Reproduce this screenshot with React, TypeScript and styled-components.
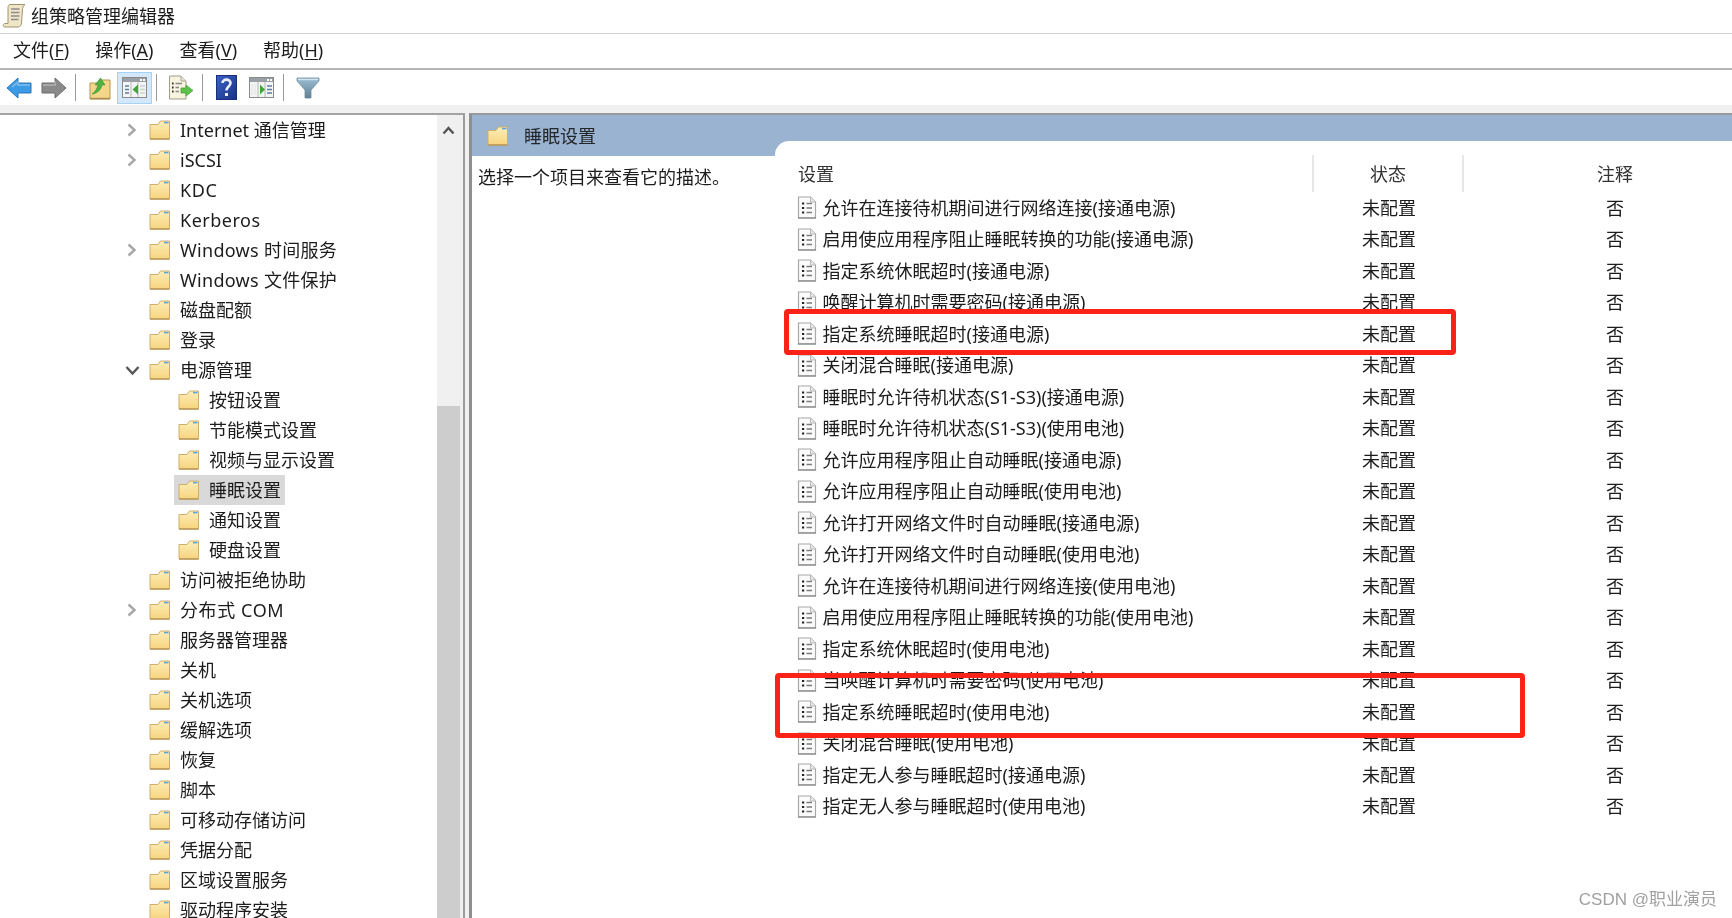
import React from "react";
import styled, { createGlobalStyle } from "styled-components";

const GlobalStyle = createGlobalStyle`
  html, body {
    margin: 0;
    padding: 0;
    height: 100%;
    overflow: hidden;
    background: #fff;
  }
  body {
    font-family: "Noto Sans", "Noto Sans CJK SC", sans-serif;
    font-size: 18px;
    color: #1c1c1c;
  }
`;

const Page = styled.div`
  position: relative;
  display: flex;
  flex-direction: column;
  width: 1732px;
  height: 918px;
  overflow: hidden;
  filter: blur(0.35px);
`;

const TitleBar = styled.div`
  display: flex;
  align-items: center;
  gap: 5px;
  height: 34px;
  padding: 0 0 3px 2px;
  box-sizing: border-box;
  border-bottom: 1px solid #cfcfcf;
  flex: none;
`;

const MenuBar = styled.div`
  display: flex;
  align-items: center;
  gap: 26px;
  height: 32px;
  padding: 0 0 2px 13px;
  border-bottom: 2px solid #b4b4b4;
  flex: none;
`;

const MenuItem = styled.span`
  line-height: 24px;
  u {
    text-underline-offset: 2px;
  }
`;

const Toolbar = styled.div`
  display: flex;
  align-items: center;
  height: 35px;
  padding-left: 1px;
  flex: none;
`;

const ToolButton = styled.div<{ $active?: boolean }>`
  display: flex;
  align-items: center;
  justify-content: center;
  width: 35px;
  height: 32px;
  box-sizing: border-box;
  background: ${(p) => (p.$active ? "#d3e9fb" : "transparent")};
  border: 1px solid ${(p) => (p.$active ? "#a5d3f7" : "transparent")};
`;

const ToolSep = styled.div`
  width: 1px;
  height: 27px;
  margin: 0 6px 0 4px;
  background: #9a9a9a;
`;

const Main = styled.div`
  display: flex;
  flex: 1;
  min-height: 0;
  padding-top: 8px;
  background: #f0f0f0;
`;

const TreePane = styled.div`
  display: flex;
  width: 463px;
  border-top: 2px solid #a3a3a3;
  border-right: 2px solid #9c9c9c;
  background: #fff;
  flex: none;
`;

const TreeList = styled.div`
  width: 437px;
  flex: none;
  overflow: hidden;
`;

const TreeRow = styled.div<{ $nested: boolean }>`
  display: flex;
  align-items: center;
  height: 30px;
  padding-left: ${(p) => (p.$nested ? 178 : 124)}px;
`;

const Caret = styled.span`
  display: flex;
  align-items: center;
  justify-content: center;
  width: 16px;
  margin-right: 9px;
  flex: none;
`;

const TreeLabel = styled.span<{ $track?: number }>`
  display: flex;
  align-items: center;
  gap: 9px;
  height: 30px;
  line-height: 30px;
  white-space: nowrap;
  padding-right: 4px;
  letter-spacing: ${(p) => p.$track ?? 0}px;
`;

const SelectedLabel = styled(TreeLabel)`
  background: #d9d9d9;
  margin-left: -4px;
  padding-left: 4px;
`;

const ScrollTrack = styled.div`
  display: flex;
  flex-direction: column;
  width: 26px;
  padding-right: 3px;
  box-sizing: border-box;
  background: #f0f0f0;
  flex: none;
`;

const ScrollArrow = styled.div`
  display: flex;
  justify-content: center;
  align-items: center;
  height: 30px;
  margin-bottom: 261px;
`;

const ScrollThumb = styled.div`
  flex: 1;
  background: #cdcdcd;
`;

const RightPane = styled.div`
  display: flex;
  flex: 1;
  min-width: 0;
  margin-left: 4px;
  border-top: 2px solid #9a9a9a;
  border-left: 3px solid #8f8f8f;
  background: #fff;
`;

const DescColumn = styled.div`
  width: 303px;
  flex: none;
`;

const DescHeader = styled.div`
  display: flex;
  align-items: center;
  gap: 15px;
  height: 41px;
  padding-left: 15px;
  box-sizing: border-box;
  background: #9ab3d1;
`;

const DescHeaderTitle = styled.span`
  color: #23262b;
  line-height: 24px;
`;

const DescText = styled.div`
  padding: 9px 0 0 6px;
  line-height: 24px;
  white-space: nowrap;
`;

const ListColumn = styled.div`
  flex: 1;
  min-width: 0;
  padding-top: 26px;
  background: linear-gradient(#9ab3d1 41px, #fff 41px);
`;

const ListPanel = styled.div`
  height: 100%;
  padding-top: 14px;
  box-sizing: border-box;
  background: #fff;
  border-top-left-radius: 14px;
`;

const ListHeader = styled.div`
  display: grid;
  grid-template-columns: 539px 150px 1fr;
  height: 37px;
`;

const HeaderCell = styled.div<{ $center?: boolean }>`
  display: flex;
  align-items: center;
  justify-content: ${(p) => (p.$center ? "center" : "flex-start")};
  padding: 0 0 2px ${(p) => (p.$center ? 0 : 23)}px;
  border-right: 2px solid #e6e6e6;
  color: #333;
`;

const NoteHeader = styled(HeaderCell)`
  padding-left: 34px;
  border-right: 0;
`;

const ListRow = styled.div`
  display: grid;
  grid-template-columns: 539px 150px 1fr;
  height: 31.5px;
  align-items: center;
`;

const NameCell = styled.div`
  display: flex;
  align-items: center;
  gap: 5.5px;
  padding-left: 22px;
  line-height: 24px;
  white-space: nowrap;
`;

const StatusCell = styled.div`
  text-align: center;
  line-height: 24px;
`;

const NoteCell = styled.div`
  padding-left: 34px;
  text-align: center;
  line-height: 24px;
`;

const Highlight = styled.div<{ $l: number; $t: number; $w: number; $h: number }>`
  position: absolute;
  left: ${(p) => p.$l}px;
  top: ${(p) => p.$t}px;
  width: ${(p) => p.$w}px;
  height: ${(p) => p.$h}px;
  box-sizing: border-box;
  border: 5px solid #fb2317;
  border-radius: 4px;
`;

const Watermark = styled.div`
  position: absolute;
  right: 15px;
  top: 889px;
  font-family: "Liberation Sans", "Noto Sans CJK SC", sans-serif;
  font-size: 17px;
  line-height: 22px;
  color: #a0a0a0;
  white-space: nowrap;
`;

const FolderIcon = () => (
  <svg width="22" height="20" viewBox="0 0 22 20" style={{ flex: "none" }}>
    <defs>
      <linearGradient id="folderFill" x1="0" y1="0" x2="0" y2="1">
        <stop offset="0" stopColor="#fdeeb8" />
        <stop offset="1" stopColor="#f6d47e" />
      </linearGradient>
    </defs>
    <path d="M1 4.5 H9 L11.5 1 H20.5 V19 H1 Z" fill="url(#folderFill)" stroke="#cfae6b" strokeWidth="1" />
    <path d="M1 19 H20.5" stroke="#b8955a" strokeWidth="1.4" />
    <path d="M15 2.6 H19.5" stroke="#5aa8e0" strokeWidth="1.6" />
  </svg>
);

const PolicyIcon = () => (
  <svg width="20" height="23" viewBox="0 0 20 23" style={{ flex: "none" }}>
    <path d="M1.5 1 H13.5 L18.5 6 V21.8 H1.5 Z" fill="#fbfbfb" stroke="#a8a8a8" strokeWidth="1.2" />
    <path d="M13.5 1 V6 H18.5" fill="#e8e8e8" stroke="#b8b8b8" strokeWidth="1" />
    <path d="M1 22 H19" stroke="#8c8c8c" strokeWidth="1.2" />
    <path d="M5 7.5 H7.2 M5 12 H7.2 M5 16.5 H7.2" stroke="#222" strokeWidth="2.2" />
    <path d="M9.5 7.5 H15 M9.5 12 H15 M9.5 16.5 H15" stroke="#7b7b7b" strokeWidth="1.4" />
  </svg>
);

const ChevronRight = () => (
  <svg width="12" height="14" viewBox="0 0 12 14">
    <path d="M2.5 1.5 L8.5 7 L2.5 12.5" fill="none" stroke="#a8a8a8" strokeWidth="2.4" />
  </svg>
);

const ChevronDown = () => (
  <svg width="15" height="11" viewBox="0 0 15 11">
    <path d="M1.5 2 L7.5 8.5 L13.5 2" fill="none" stroke="#555" strokeWidth="2.4" />
  </svg>
);

const ChevronUp = () => (
  <svg width="13" height="9" viewBox="0 0 13 9">
    <path d="M1.5 7.5 L6.5 2 L11.5 7.5" fill="none" stroke="#555" strokeWidth="2.4" />
  </svg>
);

const ScrollIcon = () => (
  <svg width="24" height="25" viewBox="0 0 24 25" style={{ flex: "none" }}>
    <path d="M8 1.5 H23 C21 3 20.5 5 20.5 7 L19.5 20 C19.3 22.5 18 24 16 24 H3 C0.5 24 0.5 21 3 20.5 H6 L6 5 C6 3 6.5 1.5 8 1.5 Z" fill="#efe6c8" stroke="#a0946f" strokeWidth="1" />
    <path d="M9 6 H17.5 M9 9.5 H17.5 M9 13 H17.5 M9 16.5 H16.5" stroke="#8d8d8d" strokeWidth="1.3" />
  </svg>
);

const ArrowIcon = ({ dir, fill, edge }: { dir: "l" | "r"; fill: string; edge: string }) => (
  <svg width="26" height="24" viewBox="0 0 26 24">
    <path
      d={dir === "l" ? "M1 12 L12 2 V7 H25 V17 H12 V22 Z" : "M25 12 L14 2 V7 H1 V17 H14 V22 Z"}
      fill={fill}
      stroke={edge}
      strokeWidth="1"
    />
    <path d={dir === "l" ? "M6 11 L12 6 V9 H24" : "M2 9 H14 V5"} fill="none" stroke="#ffffff" strokeOpacity="0.35" strokeWidth="1.5" />
  </svg>
);

const UpFolderIcon = () => (
  <svg width="24" height="24" viewBox="0 0 24 24">
    <path d="M2 7 H10 L12 4 H22 V23 H2 Z" fill="#f3d68a" stroke="#b8964f" strokeWidth="1" />
    <path d="M2 22.5 H22" stroke="#a98a4d" strokeWidth="1.4" />
    <path d="M4 18 C7 16 9 13 10 9 H7 L12.5 2 L17 9 H14 C13 14 9 17.5 4 18 Z" fill="#4fb13f" stroke="#3c8f30" strokeWidth="0.6" />
  </svg>
);

const PanelIcon = ({ side }: { side: "l" | "r" }) => (
  <svg width="25" height="21" viewBox="0 0 25 21">
    <rect x="0.5" y="0.5" width="24" height="20" fill="#f4f4f4" stroke="#8a8a8a" />
    <rect x="1" y="1" width="23" height="4" fill="#9a9fa6" />
    <rect x="18" y="2" width="2" height="2" fill="#fff" />
    <rect x="21" y="2" width="2" height="2" fill="#fff" />
    <path d="M9 5 V20 M16 5 V20" stroke="#b5b5b5" strokeWidth="1" />
    {side === "l" ? (
      <>
        <path d="M3 9 H7 M3 12.5 H7 M3 16 H7" stroke="#5d7f9e" strokeWidth="1.6" />
        <path d="M16 7.5 V17.5 L10.5 12.5 Z" fill="#3fa63a" />
        <path d="M18 9 H23 M18 12.5 H23 M18 16 H23" stroke="#d0d0d0" strokeWidth="1.6" />
      </>
    ) : (
      <>
        <path d="M3 7 V18 M6 7 V18" stroke="#e2e2e2" strokeWidth="1" />
        <path d="M11 7.5 V17.5 L16 12.5 Z" fill="#3fa63a" />
        <path d="M18 9 H23 M18 12.5 H23 M18 16 H23" stroke="#5d7f9e" strokeWidth="1.6" />
      </>
    )}
  </svg>
);

const ExportIcon = () => (
  <svg width="26" height="25" viewBox="0 0 26 25">
    <path d="M1.5 1 H13 L18 6 V24 H1.5 Z" fill="#f8f3df" stroke="#9e9e8c" strokeWidth="1" />
    <path d="M13 1 V6 H18" fill="#e7e3d0" stroke="#a8a898" strokeWidth="1" />
    <path d="M4 8.5 H5.6 M4 12.5 H5.6 M4 16.5 H5.6" stroke="#333" strokeWidth="1.8" />
    <path d="M7.5 8.5 H14 M7.5 12.5 H11 M7.5 16.5 H11" stroke="#888" strokeWidth="1.3" />
    <path d="M13 13 H18 V10 L25 15.5 L18 21 V18 H13 Z" fill="#5cc24b" stroke="#3f9c35" strokeWidth="0.7" />
  </svg>
);

const HelpIcon = () => (
  <svg width="21" height="25" viewBox="0 0 21 25">
    <defs>
      <linearGradient id="helpFill" x1="0" y1="0" x2="1" y2="1">
        <stop offset="0" stopColor="#3b62c6" />
        <stop offset="1" stopColor="#1a3184" />
      </linearGradient>
    </defs>
    <rect x="0.5" y="0.5" width="20" height="24" fill="url(#helpFill)" stroke="#1a2f78" />
    <path d="M6.5 8 C6.5 3.5 14.5 3.5 14.5 8 C14.5 11.5 10.5 11.5 10.5 15.5" fill="none" stroke="#e9edf8" strokeWidth="2.6" />
    <rect x="9" y="18" width="3" height="3" fill="#e9edf8" />
  </svg>
);

const FilterIcon = () => (
  <svg width="24" height="22" viewBox="0 0 24 22">
    <defs>
      <linearGradient id="filterFill" x1="0" y1="0" x2="0" y2="1">
        <stop offset="0" stopColor="#9cc0d4" />
        <stop offset="1" stopColor="#5f7f92" />
      </linearGradient>
    </defs>
    <path d="M1 1 H23 V4 L15 13 V21 H9 V13 L1 4 Z" fill="url(#filterFill)" stroke="#6d8c9e" strokeWidth="0.8" />
    <path d="M2 2.5 H22" stroke="#d5e4ec" strokeWidth="1.4" />
  </svg>
);

type TreeItem = {
  label: string;
  nested?: boolean;
  caret?: "right" | "down";
  selected?: boolean;
  track?: number;
};

const treeItems: TreeItem[] = [
  { label: "Internet 通信管理", caret: "right" },
  { label: "iSCSI", caret: "right" },
  { label: "KDC", track: 0.6 },
  { label: "Kerberos", track: 0.5 },
  { label: "Windows 时间服务", caret: "right", track: 0.3 },
  { label: "Windows 文件保护", track: 0.3 },
  { label: "磁盘配额" },
  { label: "登录" },
  { label: "电源管理", caret: "down" },
  { label: "按钮设置", nested: true },
  { label: "节能模式设置", nested: true },
  { label: "视频与显示设置", nested: true },
  { label: "睡眠设置", nested: true, selected: true },
  { label: "通知设置", nested: true },
  { label: "硬盘设置", nested: true },
  { label: "访问被拒绝协助" },
  { label: "分布式 COM", caret: "right", track: 0.6 },
  { label: "服务器管理器" },
  { label: "关机" },
  { label: "关机选项" },
  { label: "缓解选项" },
  { label: "恢复" },
  { label: "脚本" },
  { label: "可移动存储访问" },
  { label: "凭据分配" },
  { label: "区域设置服务" },
  { label: "驱动程序安装" },
];

const settings = [
  "允许在连接待机期间进行网络连接(接通电源)",
  "启用使应用程序阻止睡眠转换的功能(接通电源)",
  "指定系统休眠超时(接通电源)",
  "唤醒计算机时需要密码(接通电源)",
  "指定系统睡眠超时(接通电源)",
  "关闭混合睡眠(接通电源)",
  "睡眠时允许待机状态(S1-S3)(接通电源)",
  "睡眠时允许待机状态(S1-S3)(使用电池)",
  "允许应用程序阻止自动睡眠(接通电源)",
  "允许应用程序阻止自动睡眠(使用电池)",
  "允许打开网络文件时自动睡眠(接通电源)",
  "允许打开网络文件时自动睡眠(使用电池)",
  "允许在连接待机期间进行网络连接(使用电池)",
  "启用使应用程序阻止睡眠转换的功能(使用电池)",
  "指定系统休眠超时(使用电池)",
  "当唤醒计算机时需要密码(使用电池)",
  "指定系统睡眠超时(使用电池)",
  "关闭混合睡眠(使用电池)",
  "指定无人参与睡眠超时(接通电源)",
  "指定无人参与睡眠超时(使用电池)",
];

const menus = [
  { name: "文件", key: "F" },
  { name: "操作", key: "A" },
  { name: "查看", key: "V" },
  { name: "帮助", key: "H" },
];

const App: React.FC = () => {
  return (
    <>
      <GlobalStyle />
      <Page>
        <TitleBar>
          <ScrollIcon />
          <span>组策略管理编辑器</span>
        </TitleBar>
        <MenuBar>
          {menus.map((m) => (
            <MenuItem key={m.key}>
              {m.name}(<u>{m.key}</u>)
            </MenuItem>
          ))}
        </MenuBar>
        <Toolbar>
          <ToolButton>
            <ArrowIcon dir="l" fill="#3d9be6" edge="#2b74b8" />
          </ToolButton>
          <ToolButton>
            <ArrowIcon dir="r" fill="#8a8a8a" edge="#6c6c6c" />
          </ToolButton>
          <ToolSep />
          <ToolButton>
            <UpFolderIcon />
          </ToolButton>
          <ToolButton $active>
            <PanelIcon side="l" />
          </ToolButton>
          <ToolSep />
          <ToolButton>
            <ExportIcon />
          </ToolButton>
          <ToolSep />
          <ToolButton>
            <HelpIcon />
          </ToolButton>
          <ToolButton>
            <PanelIcon side="r" />
          </ToolButton>
          <ToolSep />
          <ToolButton>
            <FilterIcon />
          </ToolButton>
        </Toolbar>
        <Main>
          <TreePane>
            <TreeList>
              {treeItems.map((item) => {
                const Label = item.selected ? SelectedLabel : TreeLabel;
                return (
                  <TreeRow key={item.label} $nested={!!item.nested}>
                    {!item.nested && (
                      <Caret>
                        {item.caret === "right" && <ChevronRight />}
                        {item.caret === "down" && <ChevronDown />}
                      </Caret>
                    )}
                    <Label $track={item.track}>
                      <FolderIcon />
                      {item.label}
                    </Label>
                  </TreeRow>
                );
              })}
            </TreeList>
            <ScrollTrack>
              <ScrollArrow>
                <ChevronUp />
              </ScrollArrow>
              <ScrollThumb />
            </ScrollTrack>
          </TreePane>
          <RightPane>
            <DescColumn>
              <DescHeader>
                <FolderIcon />
                <DescHeaderTitle>睡眠设置</DescHeaderTitle>
              </DescHeader>
              <DescText>选择一个项目来查看它的描述。</DescText>
            </DescColumn>
            <ListColumn>
              <ListPanel>
                <ListHeader>
                  <HeaderCell>设置</HeaderCell>
                  <HeaderCell $center>状态</HeaderCell>
                  <NoteHeader $center>注释</NoteHeader>
                </ListHeader>
                {settings.map((s) => (
                  <ListRow key={s}>
                    <NameCell>
                      <PolicyIcon />
                      {s}
                    </NameCell>
                    <StatusCell>未配置</StatusCell>
                    <NoteCell>否</NoteCell>
                  </ListRow>
                ))}
              </ListPanel>
            </ListColumn>
          </RightPane>
        </Main>
        <Highlight $l={784} $t={309} $w={672} $h={46} />
        <Highlight $l={775} $t={673} $w={750} $h={65} />
        <Watermark>CSDN @职业演员</Watermark>
      </Page>
    </>
  );
};

export default App;
